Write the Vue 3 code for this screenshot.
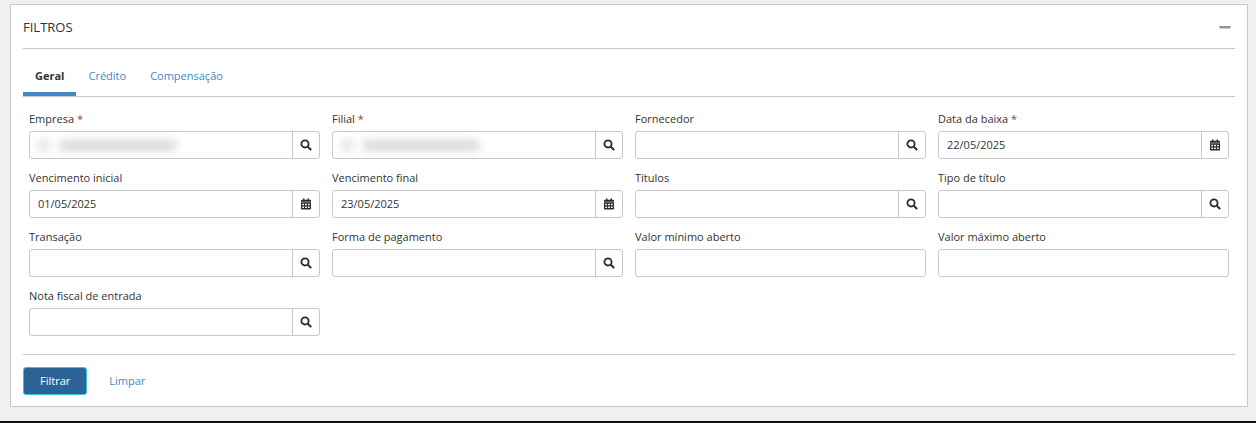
<script setup>
import { ref, reactive } from 'vue'

const tabs = ['Geral', 'Crédito', 'Compensação']
const activeTab = ref('Geral')
const open = ref(true)

const fields = reactive([
  { id: 'empresa', label: 'Empresa', required: true, icon: 'search', value: '', masked: true },
  { id: 'filial', label: 'Filial', required: true, icon: 'search', value: '', masked: true },
  { id: 'fornecedor', label: 'Fornecedor', icon: 'search', value: '' },
  { id: 'data-baixa', label: 'Data da baixa', required: true, icon: 'calendar', value: '22/05/2025' },
  { id: 'vencimento-inicial', label: 'Vencimento inicial', icon: 'calendar', value: '01/05/2025' },
  { id: 'vencimento-final', label: 'Vencimento final', icon: 'calendar', value: '23/05/2025' },
  { id: 'titulos', label: 'Títulos', icon: 'search', value: '' },
  { id: 'tipo-titulo', label: 'Tipo de título', icon: 'search', value: '' },
  { id: 'transacao', label: 'Transação', icon: 'search', value: '' },
  { id: 'forma-pagamento', label: 'Forma de pagamento', icon: 'search', value: '' },
  { id: 'valor-minimo', label: 'Valor mínimo aberto', value: '' },
  { id: 'valor-maximo', label: 'Valor máximo aberto', value: '' },
  { id: 'nota-fiscal', label: 'Nota fiscal de entrada', icon: 'search', value: '' },
])

function clearFields() {
  fields.forEach((f) => {
    f.value = ''
    f.masked = false
  })
}
</script>

<template>
  <main class="page">
    <section class="panel">
      <header class="panel-head">
        <h2>FILTROS</h2>
        <button type="button" class="collapse" aria-label="Recolher" :aria-expanded="open" @click="open = !open">
          <svg width="12" height="12" viewBox="0 0 12 12" aria-hidden="true"><path d="M.5 5h11v2.5H.5z" fill="#929292" /></svg>
        </button>
      </header>

      <form v-if="open" @submit.prevent>
        <nav class="tabs">
          <a v-for="tab in tabs" :key="tab" href="#" :class="{ active: tab === activeTab }" @click.prevent="activeTab = tab">{{ tab }}</a>
        </nav>

        <div class="fields">
          <div v-for="f in fields" :key="f.id" class="field">
            <label :for="f.id">{{ f.label }}<span v-if="f.required" class="required"> *</span></label>
            <div class="group">
              <input :id="f.id" v-model="f.value" type="text" :required="f.required" autocomplete="off" />
              <span v-if="f.masked" class="mask" aria-hidden="true"><i class="code"></i><i class="name"></i></span>
              <button v-if="f.icon" type="button" :aria-label="f.label">
                <svg v-if="f.icon === 'search'" width="12" height="12" viewBox="0 0 12 12" aria-hidden="true">
                  <circle cx="5" cy="4.9" r="3.6" fill="none" stroke="#2b2b2b" stroke-width="1.8" />
                  <path d="M7.7 7.6l2.9 2.9" stroke="#2b2b2b" stroke-width="2" stroke-linecap="round" />
                </svg>
                <svg v-else width="12" height="12" viewBox="0 0 12 12" aria-hidden="true">
                  <path d="M3 .5h1.5v1.2h3V.5H9v1.2h1.3q.7 0 .7.7v1.4H1V2.4q0-.7.7-.7H3z" fill="#2b2b2b" />
                  <path fill-rule="evenodd" d="M1 4.3h10v6.5q0 .7-.7.7H1.700q-.7 0-.7-.7zM2.300 5.800v1.400h1.700v-1.400zM5.100 5.800v1.400h1.800v-1.400zM8 5.800v1.400h1.700v-1.400zM2.300 8.500v1.400h1.700v-1.400zM5.100 8.500v1.400h1.800v-1.400zM8 8.500v1.400h1.700v-1.400z" fill="#2b2b2b" />
                </svg>
              </button>
            </div>
          </div>
        </div>

        <footer class="actions">
          <button type="submit" class="primary">Filtrar</button>
          <button type="button" class="link" @click="clearFields">Limpar</button>
        </footer>
      </form>
    </section>
  </main>
</template>

<style>
body {
  background: #f0f0f0;
}
</style>

<style scoped>
.page {
  box-sizing: border-box;
  padding: 4px 8px 14px 10px;
  background: #f0f0f0;
  border-bottom: 2px solid #101114;
  color: #333;
  font: 11px/16px "Open Sans", sans-serif;
}

.page * {
  box-sizing: border-box;
}

.panel {
  padding: 0 12px 11px;
  background: #fff;
  border: 1px solid #c8c8c8;
}

.panel-head {
  display: flex;
  align-items: center;
  justify-content: space-between;
  height: 44px;
  padding-right: 4px;
  border-bottom: 1px solid #c8c8c8;
}

h2 {
  margin: 0;
  font-size: 13px;
  font-weight: 400;
}

button {
  display: flex;
  align-items: center;
  justify-content: center;
  padding: 0;
  border: 0;
  background: none;
  color: inherit;
  font: inherit;
  cursor: pointer;
}

.tabs {
  display: flex;
  margin-top: 8px;
  border-bottom: 1px solid #c8c8c8;
}

.tabs a {
  height: 39px;
  padding: 11px 12px 8px;
  border-bottom: 4px solid transparent;
  color: #4488bd;
  text-decoration: none;
}

.tabs .active {
  border-color: #4488c4;
  color: #333;
  font-weight: 700;
}

.fields {
  display: grid;
  grid-template-columns: repeat(4, minmax(0, 1fr));
  gap: 11px 12px;
  padding: 14px 6px 18px;
}

.field label {
  display: block;
  margin-bottom: 4px;
}

.required {
  color: #b5301c;
}

.group {
  position: relative;
  display: flex;
  height: 28px;
  border: 1px solid #c8c8c8;
  border-radius: 3px;
  background: #fff;
}

.group input {
  flex: 1;
  min-width: 0;
  padding: 0 8px;
  border: 0;
  outline: 0;
  background: none;
  color: #333;
  font: inherit;
}

.group button {
  width: 27px;
  border-left: 1px solid #c8c8c8;
}

.mask {
  position: absolute;
  top: 8px;
  left: 8px;
  display: flex;
  gap: 10px;
  filter: blur(4px);
  pointer-events: none;
}

.mask i {
  height: 11px;
  background: #d9d9d9;
}

.mask .code {
  width: 12px;
  background: #e2e2e2;
}

.mask .name {
  width: 116px;
}

.actions {
  display: flex;
  gap: 12px;
  padding-top: 12px;
  border-top: 1px solid #c8c8c8;
}

.actions button {
  height: 28px;
  padding: 0 10px;
}

.actions .primary {
  padding: 0 16px;
  border: 1px solid #37c3d6;
  border-radius: 3px;
  background: #2a6496;
  color: #fff;
}

.actions .link {
  color: #4488bd;
}
</style>
